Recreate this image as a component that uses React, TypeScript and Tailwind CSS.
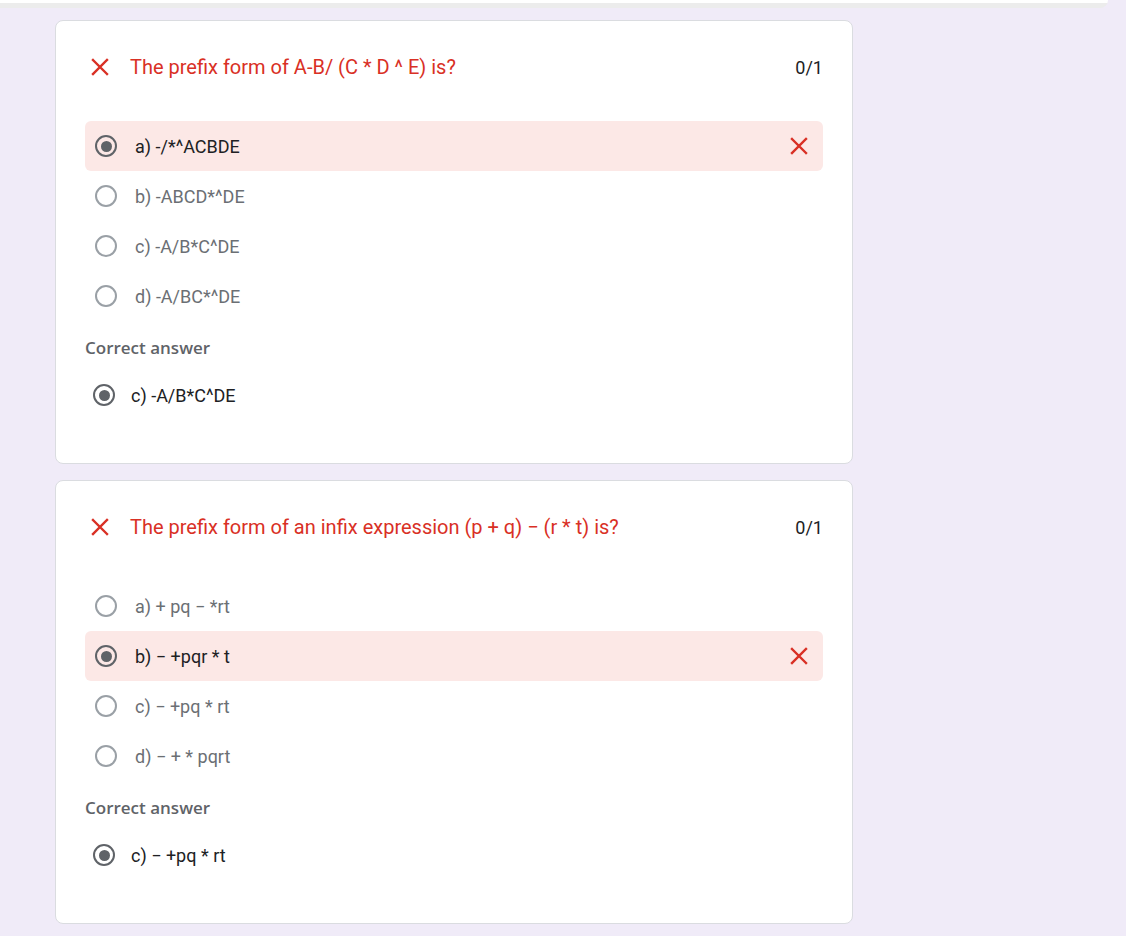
import React from 'react';

type Option = { label: string; chosen?: boolean };

type Question = {
    title: string;
    options: Option[];
    correct: string;
};

const questions: Question[] = [
    {
        title: 'The prefix form of A-B/ (C * D ^ E) is?',
        options: [
            { label: 'a) -/*^ACBDE', chosen: true },
            { label: 'b) -ABCD*^DE' },
            { label: 'c) -A/B*C^DE' },
            { label: 'd) -A/BC*^DE' },
        ],
        correct: 'c) -A/B*C^DE',
    },
    {
        title: 'The prefix form of an infix expression (p + q) \u2212 (r * t) is?',
        options: [
            { label: 'a) + pq \u2212 *rt' },
            { label: 'b) \u2212 +pqr * t', chosen: true },
            { label: 'c) \u2212 +pq * rt' },
            { label: 'd) \u2212 + * pqrt' },
        ],
        correct: 'c) \u2212 +pq * rt',
    },
];

const Cross = () => (
    <svg width="18" height="18" viewBox="0 0 18 18" className="shrink-0">
        <path d="M2 2 L16 16 M16 2 L2 16" stroke="#d93025" strokeWidth="2.4" strokeLinecap="square" />
    </svg>
);

const Radio = ({ checked }: { checked?: boolean }) => (
    <span
        className={`flex h-[22px] w-[22px] shrink-0 items-center justify-center rounded-full border-2 ${
            checked ? 'border-[#5f6368]' : 'border-[#9aa0a6]'
        }`}
    >
        {checked && <span className="h-[11px] w-[11px] rounded-full bg-[#5f6368]" />}
    </span>
);

const QuestionCard = ({ q }: { q: Question }) => (
    <div className="rounded-lg border border-[#dadce0] bg-white px-[29px] pt-[34px] pb-[44px]">
        <div className="flex h-6 items-center">
            <div className="w-[45px] pl-[6px]">
                <Cross />
            </div>
            <p className="flex-1 text-[20px] text-[#d93025]">{q.title}</p>
            <span className="text-[18px] text-[#202124]">0/1</span>
        </div>

        <div className="mt-[42px]">
            {q.options.map(opt => (
                <div
                    key={opt.label}
                    className={`flex h-[50px] items-center rounded-md pl-[10px] pr-[15px] ${
                        opt.chosen ? 'bg-[#fce8e6]' : ''
                    }`}
                >
                    <Radio checked={opt.chosen} />
                    <span className={`ml-[18px] flex-1 text-[18px] ${opt.chosen ? 'text-[#202124]' : 'text-[#6b6f74]'}`}>
                        {opt.label}
                    </span>
                    {opt.chosen && <Cross />}
                </div>
            ))}
        </div>

        <p className="mt-[15px] h-6 text-[17px] leading-6 font-semibold text-[#5f6368] [font-family:'Open_Sans',sans-serif]">
            Correct answer
        </p>
        <div className="mt-[11px] flex h-[48px] items-center pl-[8px]">
            <Radio checked />
            <span className="ml-[16px] text-[18px] text-[#202124]">{q.correct}</span>
        </div>
    </div>
);

const App: React.FC = () => {
    return (
        <div className="min-h-screen bg-[#f0ebf8] font-['Roboto',sans-serif]">
            <div className="h-2 w-[1108px] rounded-br-lg border-t-[3px] border-white bg-[#ececec]" />
            <div className="mt-3 ml-[55px] flex w-[798px] flex-col gap-4 pb-4">
                {questions.map(q => (
                    <QuestionCard key={q.title} q={q} />
                ))}
            </div>
        </div>
    );
};

export default App;
